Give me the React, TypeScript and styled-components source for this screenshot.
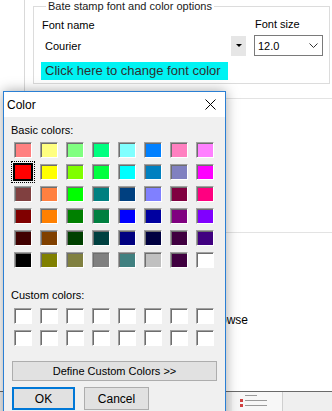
import React from 'react';
import styled, { createGlobalStyle, css } from 'styled-components';

const GlobalStyle = createGlobalStyle`
  html, body {
    margin: 0;
    padding: 0;
    background: #ffffff;
    font-family: 'Liberation Sans', Arial, sans-serif;
    color: #000;
  }
`;

const Screen = styled.div`
  position: relative;
  width: 332px;
  height: 411px;
  overflow: hidden;
  background: #ffffff;
  display: flex;
  flex-direction: column;
  font-size: 11px;
`;

const TopArea = styled.div`
  flex: 1;
  display: flex;
  min-height: 0;
`;

const LeftRail = styled.div`
  width: 24px;
  flex-shrink: 0;
  border-right: 1px solid #d9d9d9;
`;

const Main = styled.div`
  flex: 1;
  display: flex;
  flex-direction: column;
  min-width: 0;
`;

const GroupBox = styled.fieldset`
  margin: 0 2px 0 8px;
  padding: 0 6px 3px 7px;
  border: 1px solid #dcdcdc;
  min-width: 0;
`;

const Legend = styled.legend`
  margin-left: 5px;
  padding: 0 2px;
  font-size: 11px;
  line-height: 12px;
  color: #1a1a1a;
`;

const FieldGrid = styled.div`
  display: grid;
  grid-template-columns: 205px 1fr;
  column-gap: 8px;
`;

const FieldLabel = styled.div<{ $shift?: number }>`
  margin-top: ${(p) => 7 - (p.$shift ?? 0)}px;
  margin-bottom: ${(p) => 3 + (p.$shift ?? 0)}px;
  padding-left: 1px;
  line-height: 13px;
  height: 13px;
`;

const FlatCombo = styled.div`
  display: flex;
  align-items: center;
  height: 21px;
  padding-left: 4px;
`;

const DropButton = styled.div`
  margin-left: auto;
  width: 15px;
  height: 20px;
  background: #e6e6e6;
  display: flex;
  align-items: center;
  justify-content: center;
`;

const Caret = styled.div`
  width: 0;
  height: 0;
  border-left: 3px solid transparent;
  border-right: 3px solid transparent;
  border-top: 3px solid #000;
  margin-left: 1px;
`;

const SizeCombo = styled.div`
  display: flex;
  align-items: center;
  justify-content: space-between;
  height: 21px;
  box-sizing: border-box;
  border: 1px solid #7a7a7a;
  background: #fff;
  padding: 0 4px 0 3px;
`;

const ColorBar = styled.div`
  grid-column: 1 / -1;
  margin-top: 6px;
  width: 187px;
  height: 18px;
  box-sizing: border-box;
  background: #00f3f3;
  color: #303030;
  font-size: 13px;
  line-height: 18px;
  padding-left: 4px;
  white-space: nowrap;
`;

const Section = styled.div<{ $height?: number }>`
  border-top: 1px solid #e3e3e3;
  ${(p) =>
    p.$height
      ? css`
          height: ${p.$height}px;
          flex-shrink: 0;
        `
      : css`
          flex: 1;
        `}
`;

const FirstSection = styled(Section)`
  margin-top: 14px;
`;

const BrowseRow = styled.div`
  padding: 80px 0 0 183px;
  font-size: 12px;
  line-height: 14px;
`;

const BottomStrip = styled.div`
  height: 19px;
  flex-shrink: 0;
  border-top: 1px solid #6a6a6a;
  background: #efefef;
  display: flex;
  padding-left: 232px;
`;

const ThumbPanel = styled.div`
  width: 51px;
  background: #f7f7f7;
  border-right: 1px solid #cfcfcf;
  display: flex;
  flex-direction: column;
  gap: 2px;
  padding: 2px 0 0 8px;
  box-sizing: border-box;
`;

const ThumbLine = styled.div<{ $red?: boolean }>`
  display: flex;
  align-items: center;
  gap: 2px;
  &::before {
    content: '';
    width: 3px;
    height: 3px;
    background: ${(p) => (p.$red ? '#d04040' : 'transparent')};
  }
  &::after {
    content: '';
    width: ${(p) => (p.$red ? 22 : 12)}px;
    height: 1px;
    background: #9a9a9a;
  }
`;

/* ---------- Color dialog ---------- */

const Dialog = styled.div`
  position: absolute;
  left: 3px;
  top: 91px;
  width: 223px;
  height: 340px;
  box-sizing: border-box;
  border: 1px solid #2a7fd4;
  background: #f0f0f0;
  box-shadow: 0 0 12px rgba(0, 0, 0, 0.35);
  display: flex;
  flex-direction: column;
`;

const TitleBar = styled.div`
  height: 25px;
  background: #ffffff;
  display: flex;
  align-items: center;
  justify-content: space-between;
  padding: 0 9px 0 3px;
  flex-shrink: 0;
`;

const Title = styled.span`
  font-size: 12px;
  color: #000;
`;

const DialogBody = styled.div`
  padding: 7px 0 0 7px;
  display: flex;
  flex-direction: column;
`;

const SectionLabel = styled.div<{ $top?: number }>`
  margin-top: ${(p) => p.$top ?? 0}px;
  line-height: 13px;
  font-size: 11px;
`;

const SwatchGrid = styled.div<{ $top: number }>`
  margin: ${(p) => p.$top}px 0 0 3px;
  display: grid;
  grid-template-columns: repeat(8, 18px);
  grid-auto-rows: 16px;
  column-gap: 8px;
  row-gap: 6px;
`;

const Swatch = styled.div<{ $c: string; $sel?: boolean }>`
  box-sizing: border-box;
  background: ${(p) => p.$c};
  border: 1px solid;
  border-color: #a0a0a0 #ffffff #ffffff #a0a0a0;
  box-shadow: inset 1px 1px 0 #6e6e6e;
  ${(p) =>
    p.$sel &&
    css`
      border-color: #000;
      box-shadow: 0 0 0 1px #000;
      outline: 1px dotted #000;
      outline-offset: 2px;
    `}
`;

const WideButton = styled.button`
  margin: 15px 0 0 1px;
  width: 205px;
  height: 20px;
  box-sizing: border-box;
  border: 1px solid #adadad;
  background: #e1e1e1;
  font-family: inherit;
  font-size: 11px;
  color: #000;
  padding: 0;
`;

const ButtonRow = styled.div`
  margin: 6px 0 0 1px;
  display: flex;
  gap: 9px;
`;

const DlgButton = styled.button<{ $default?: boolean }>`
  width: ${(p) => (p.$default ? 63 : 65)}px;
  height: 23px;
  box-sizing: border-box;
  border: ${(p) => (p.$default ? '2px solid #0078d7' : '1px solid #adadad')};
  background: #e1e1e1;
  font-family: inherit;
  font-size: 12px;
  color: #000;
  padding: 0;
`;

const basic = [
  '#ff8080', '#ffff80', '#80ff80', '#00ff80', '#80ffff', '#0080ff', '#ff80c0', '#ff80ff',
  '#ff0000', '#ffff00', '#80ff00', '#00ff40', '#00ffff', '#0080c0', '#8080c0', '#ff00ff',
  '#804040', '#ff8040', '#00ff00', '#008080', '#004080', '#8080ff', '#800040', '#ff0080',
  '#800000', '#ff8000', '#008000', '#008040', '#0000ff', '#0000a0', '#800080', '#8000ff',
  '#400000', '#804000', '#004000', '#004040', '#000080', '#000040', '#400040', '#400080',
  '#000000', '#808000', '#808040', '#808080', '#408080', '#c0c0c0', '#400040', '#ffffff',
];

const custom = Array.from({ length: 16 }, () => '#ffffff');

const CloseIcon = () => (
  <svg width="11" height="11" viewBox="0 0 11 11">
    <path d="M0.5 0.5 L10.5 10.5 M10.5 0.5 L0.5 10.5" stroke="#000" strokeWidth="1" fill="none" />
  </svg>
);

const Chevron = () => (
  <svg width="9" height="5" viewBox="0 0 9 5">
    <path d="M0.5 0.5 L4.5 4.5 L8.5 0.5" stroke="#333" strokeWidth="1" fill="none" />
  </svg>
);

export default function App() {
  return (
    <>
      <GlobalStyle />
      <Screen>
        <TopArea>
          <LeftRail />
          <Main>
            <GroupBox>
              <Legend>Bate stamp font and color options</Legend>
              <FieldGrid>
                <div>
                  <FieldLabel>Font name</FieldLabel>
                  <FlatCombo>
                    Courier
                    <DropButton>
                      <Caret />
                    </DropButton>
                  </FlatCombo>
                </div>
                <div>
                  <FieldLabel $shift={1}>Font size</FieldLabel>
                  <SizeCombo>
                    12.0
                    <Chevron />
                  </SizeCombo>
                </div>
                <ColorBar>Click here to change font color</ColorBar>
              </FieldGrid>
            </GroupBox>
            <FirstSection $height={133} />
            <Section>
              <BrowseRow>Browse</BrowseRow>
            </Section>
          </Main>
        </TopArea>
        <BottomStrip>
          <ThumbPanel>
            <ThumbLine />
            <ThumbLine $red />
            <ThumbLine $red />
          </ThumbPanel>
        </BottomStrip>

        <Dialog>
          <TitleBar>
            <Title>Color</Title>
            <CloseIcon />
          </TitleBar>
          <DialogBody>
            <SectionLabel>Basic colors:</SectionLabel>
            <SwatchGrid $top={5}>
              {basic.map((c, i) => (
                <Swatch key={i} $c={c} $sel={i === 8} />
              ))}
            </SwatchGrid>
            <SectionLabel $top={21}>Custom colors:</SectionLabel>
            <SwatchGrid $top={6}>
              {custom.map((c, i) => (
                <Swatch key={i} $c={c} />
              ))}
            </SwatchGrid>
            <WideButton>Define Custom Colors &gt;&gt;</WideButton>
            <ButtonRow>
              <DlgButton $default>OK</DlgButton>
              <DlgButton>Cancel</DlgButton>
            </ButtonRow>
          </DialogBody>
        </Dialog>
      </Screen>
    </>
  );
}
